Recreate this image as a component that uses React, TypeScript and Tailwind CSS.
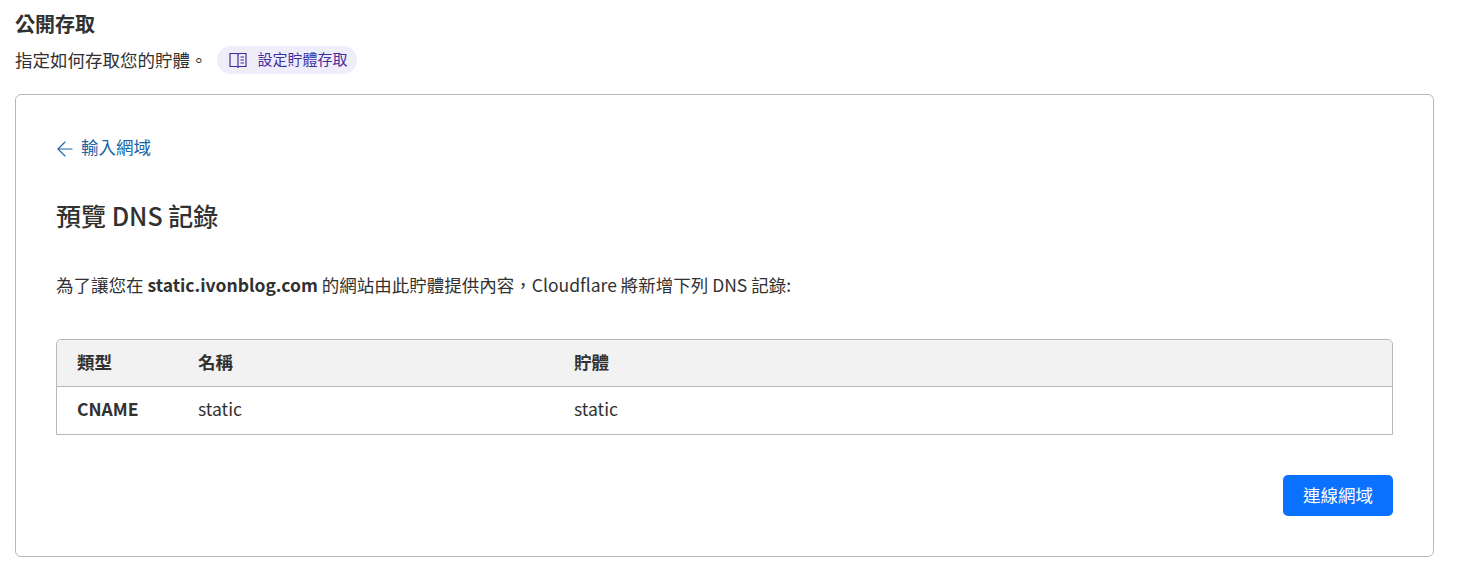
import { ArrowLeft } from "lucide-react"

const font = { fontFamily: '"Noto Sans CJK TC", "Noto Sans", sans-serif' }

const App = () => {
  return (
    <div style={font} className="w-[1461px] h-[582px] bg-white text-[#313131] px-[15px] pt-[10px] overflow-hidden">
      <h2 className="text-[20px] leading-[28px] font-bold">公開存取</h2>
      <div className="flex items-center mt-[8px] h-[28px]">
        <p className="text-[17.5px] leading-[27px] pb-[2px] whitespace-nowrap">指定如何存取您的貯體。</p>
        <a className="ml-[9px] flex items-center h-[28px] pl-[12px] pr-[9px] pb-[1px] rounded-full bg-[#f0edfb] text-[#3f2f9e] text-[15px]">
          <svg width="18" height="16" viewBox="0 0 18 16" fill="none" stroke="currentColor" strokeWidth="1.2" className="mr-[11px]">
            <path d="M1 1.5h7l1 .8 1-.8h7v13h-7l-1 .8-1-.8H1z" />
            <path d="M9 2.3v12.5" />
            <path d="M11.5 5h3.5M11.5 8h3.5M11.5 11h3.5" />
          </svg>
          設定貯體存取
        </a>
      </div>
      <div className="mt-[20px] w-[1419px] h-[463px] border border-[#b8b8b8] rounded-[6px] px-[40px] pt-[39px]">
        <a className="flex items-center text-[#1a64a6] text-[17.5px] leading-[26px]">
          <ArrowLeft size={24} strokeWidth={1.1} className="-ml-[3px] mr-[4px] mt-[3px]" />
          <span className="-mt-[1px]">輸入網域</span>
        </a>
        <h3 className="mt-[36px] text-[25px] leading-[36px] font-medium">預覽 DNS 記錄</h3>
        <p className="mt-[39px] text-[17.5px] leading-[26px] whitespace-nowrap">
          為了讓您在 <b>static.ivonblog.com</b> 的網站由此貯體提供內容，Cloudflare 將新增下列 DNS 記錄:
        </p>
        <div className="mt-[41px] w-[1337px] border border-[#b8b8b8] rounded-t-[5px] text-[17.5px]">
          <div className="grid grid-cols-[121px_376px_1fr] h-[47px] items-center bg-[#f2f2f2] font-bold border-b border-[#b8b8b8] rounded-t-[5px] pl-[20px] pb-[2px]">
            <span>類型</span>
            <span>名稱</span>
            <span>貯體</span>
          </div>
          <div className="grid grid-cols-[121px_376px_1fr] h-[47px] items-center pl-[20px] pb-[2px]">
            <span className="font-bold">CNAME</span>
            <span>static</span>
            <span>static</span>
          </div>
        </div>
        <div className="w-[1337px] flex justify-end mt-[40px]">
          <button className="w-[110px] h-[41px] bg-[#0a72ff] text-white rounded-[5px] text-[17.5px]">連線網域</button>
        </div>
      </div>
    </div>
  )
}

export default App
